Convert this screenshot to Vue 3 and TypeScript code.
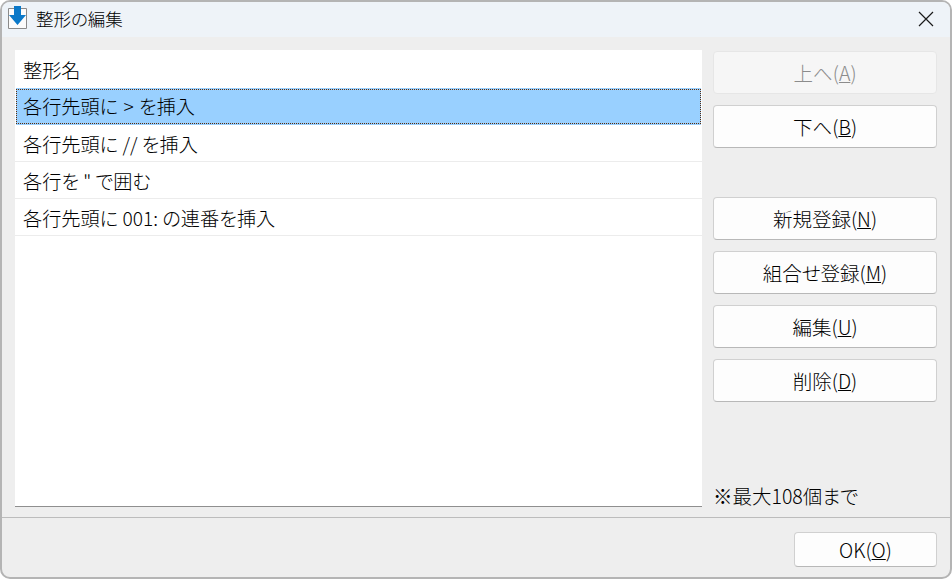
<script setup lang="ts">
const rows = ['各行先頭に // を挿入', '各行を " で囲む', '各行先頭に 001: の連番を挿入'];

const groupA = [
  { label: '上へ', key: 'A', disabled: true },
  { label: '下へ', key: 'B', disabled: false },
];

const groupB = [
  { label: '新規登録', key: 'N' },
  { label: '組合せ登録', key: 'M' },
  { label: '編集', key: 'U' },
  { label: '削除', key: 'D' },
];
</script>

<template>
  <div class="window">
    <div class="titlebar">
      <svg class="app-icon" width="20" height="24" viewBox="0 0 20 24">
        <path d="M0.5 2.5h18v20h-18z" fill="#fbfbfb" stroke="#8a8a8a" />
        <path d="M6 0h7v9h5l-8.5 10L1 9h5z" fill="#0a78c8" />
      </svg>
      <span class="title">整形の編集</span>
      <svg class="close" width="16" height="16" viewBox="0 0 16 16">
        <path d="M1 1l14 14M15 1L1 15" stroke="#1a1a1a" stroke-width="1.2" fill="none" />
      </svg>
    </div>

    <div class="content">
      <div class="list">
        <div class="list-head">整形名</div>
        <div class="row selected"><span>各行先頭に &gt; を挿入</span></div>
        <div v-for="row in rows" :key="row" class="row"><span>{{ row }}</span></div>
      </div>

      <div class="side">
        <div class="group">
          <button v-for="b in groupA" :key="b.key" class="btn" :class="{ disabled: b.disabled }">
            {{ b.label }}(<u>{{ b.key }}</u>)
          </button>
        </div>
        <div class="group second">
          <button v-for="b in groupB" :key="b.key" class="btn">
            {{ b.label }}(<u>{{ b.key }}</u>)
          </button>
        </div>
        <div class="note">※最大108個まで</div>
      </div>
    </div>

    <div class="footer">
      <button class="btn ok">OK(<u>O</u>)</button>
    </div>
  </div>
</template>

<style>
html,
body {
  margin: 0;
  background: #ffffff;
}
</style>

<style scoped>
.window {
  width: 952px;
  height: 579px;
  box-sizing: border-box;
  display: flex;
  flex-direction: column;
  overflow: hidden;
  background: #eeeeee;
  border: 2px solid #b4b4b4;
  border-radius: 10px;
  color: #000000;
  font-family: "Noto Sans CJK JP", "Noto Sans", sans-serif;
  font-size: 19.5px;
  font-weight: 300;
  font-feature-settings: "palt";
}

.titlebar {
  height: 35px;
  flex: none;
  display: flex;
  align-items: center;
  padding: 0 16px 0 6px;
  background: #eef3f8;
}

.app-icon {
  flex: none;
  margin-top: -3px;
}

.title {
  margin-left: 8px;
  font-size: 17.5px;
  margin-top: -3px;
}

.close {
  margin-left: auto;
  margin-top: -2px;
}

.content {
  flex: 1;
  display: flex;
  padding: 13px 13px 10px 13px;
  gap: 11px;
  min-height: 0;
}

.list {
  width: 687px;
  flex: none;
  box-sizing: border-box;
  background: #ffffff;
  border-bottom: 1px solid #8f8f8f;
  font-size: 19.2px;
}

.list-head {
  height: 38px;
  line-height: 40px;
  padding-left: 8px;
}

.row {
  height: 37px;
  box-sizing: border-box;
  line-height: 38px;
  padding-left: 8px;
  border-bottom: 1px solid #ececec;
}

.row.selected {
  line-height: 33px;
  margin: 0 1px 0 1px;
  padding: 1px 0 1px 0;
  background: #99d0ff;
  border: 0;
  word-spacing: 1px;
}

.row.selected span {
  display: block;
  height: 35px;
  box-sizing: border-box;
  padding-left: 6px;
  border: 1px dotted #5f2c08;
}

.side {
  flex: 1;
  display: flex;
  flex-direction: column;
  position: relative;
}

.group {
  display: flex;
  flex-direction: column;
  gap: 11px;
  padding-top: 1px;
}

.group.second {
  margin-top: 49px;
  padding-top: 0;
}

.btn {
  height: 43px;
  box-sizing: border-box;
  padding: 0;
  background: #fdfdfd;
  border: 1px solid #d0d0d0;
  border-bottom-color: #b8b8b8;
  border-radius: 4px;
  color: #000000;
  font: inherit;
  font-feature-settings: inherit;
}

.btn.disabled {
  background: #f6f6f6;
  border-color: #e6e6e6;
  color: #8c8c8c;
}

.note {
  margin-top: auto;
  line-height: 24px;
  margin-bottom: -1px;
}

.footer {
  height: 60px;
  flex: none;
  display: flex;
  justify-content: flex-end;
  align-items: flex-start;
  box-sizing: border-box;
  padding: 14px 13px 0 0;
  border-top: 1px solid #bcbcbc;
}

.btn.ok {
  width: 143px;
  height: 35px;
}
</style>
